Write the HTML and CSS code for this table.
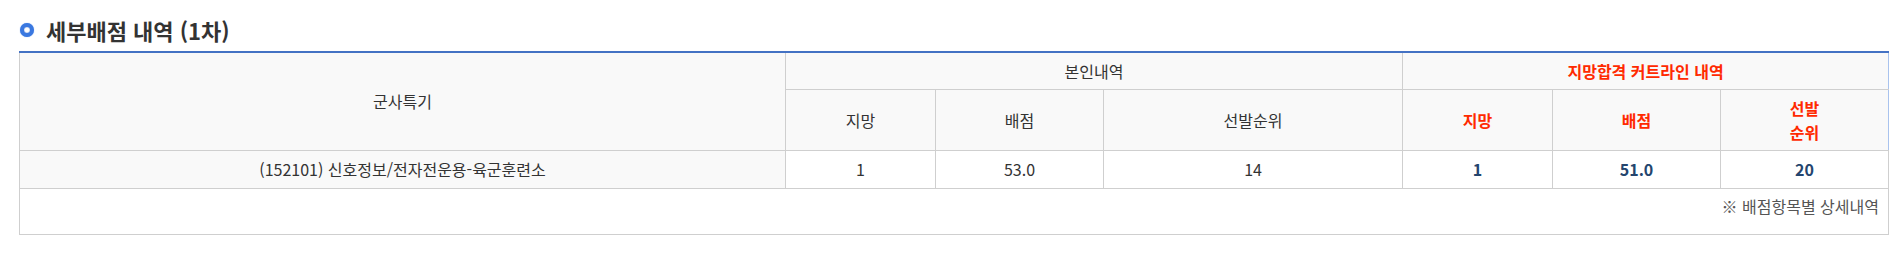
FILE: index.html
```html
<!DOCTYPE html>
<html lang="ko">
<head>
<meta charset="utf-8">
<link rel="stylesheet" href="styles.css">
</head>
<body>
<div class="wrap">
  <h3 class="title"><span class="ring"></span>세부배점 내역 (1차)</h3>
  <table class="score">
    <colgroup>
      <col class="c-name">
      <col class="c-s1">
      <col class="c-s2">
      <col class="c-s3">
      <col class="c-s1">
      <col class="c-s2">
      <col class="c-s2">
    </colgroup>
    <thead>
      <tr class="r1">
        <th rowspan="2">군사특기</th>
        <th colspan="3">본인내역</th>
        <th colspan="3" class="red last">지망합격 커트라인 내역</th>
      </tr>
      <tr class="r2">
        <th>지망</th>
        <th>배점</th>
        <th>선발순위</th>
        <th class="red">지망</th>
        <th class="red">배점</th>
        <th class="red last">선발<br>순위</th>
      </tr>
    </thead>
    <tbody>
      <tr class="r3">
        <th>(152101) 신호정보/전자전운용-육군훈련소</th>
        <td>1</td>
        <td>53.0</td>
        <td>14</td>
        <td class="cut">1</td>
        <td class="cut">51.0</td>
        <td class="cut">20</td>
      </tr>
    </tbody>
  </table>
  <div class="foot">※ 배점항목별 상세내역</div>
</div>
</body>
</html>
```

FILE: styles.css
```css
html, body {
  margin: 0;
  padding: 0;
  background: #fff;
}
body {
  font-family: "Noto Sans CJK KR", "Noto Sans", sans-serif;
  color: #333;
}
.wrap {
  width: 1870px;
  padding: 9px 0 0 19px;
}
.title {
  margin: 0;
  height: 42px;
  display: flex;
  align-items: center;
  font-size: 22px;
  font-weight: 700;
  color: #333;
}
.ring {
  width: 14px;
  height: 14px;
  border-radius: 50%;
  box-sizing: border-box;
  border: 4px solid #3a78e0;
  background: #fff;
  margin: 0 12px 0 1px;
  box-shadow: inset 0 0 1px #1f4fb0, 0 0 1px #6a9cf0;
}
.score {
  width: 1870px;
  border-collapse: collapse;
  table-layout: fixed;
  border-top: 2px solid #4472c4;
  font-size: 16px;
}
.c-name { width: 766px; }
.c-s1 { width: 150px; }
.c-s2 { width: 168px; }
.c-s3 { width: 299px; }
.score th, .score td {
  border: 1px solid #cfcfcf;
  text-align: center;
  vertical-align: middle;
  padding: 0;
  line-height: 24px;
  font-weight: 400;
}
.score thead th {
  background: #f9f9f9;
}
.score thead th.last {
  border-right-color: #a9c3ee;
}
.r1 { height: 37px; }
.r2 { height: 61px; }
.r3 { height: 38px; }
.score tbody th {
  background: #f9f9f9;
}
.score .red {
  color: #ff2a00;
  font-weight: 700;
}
.score td {
  background: #fff;
}
.score td.cut {
  color: #24456e;
  font-weight: 700;
}
.foot {
  box-sizing: border-box;
  height: 46px;
  border: 1px solid #cfcfcf;
  border-top: 0;
  text-align: right;
  padding: 5px 9px 0 0;
  font-size: 16px;
  color: #555;
  line-height: 24px;
}
```
